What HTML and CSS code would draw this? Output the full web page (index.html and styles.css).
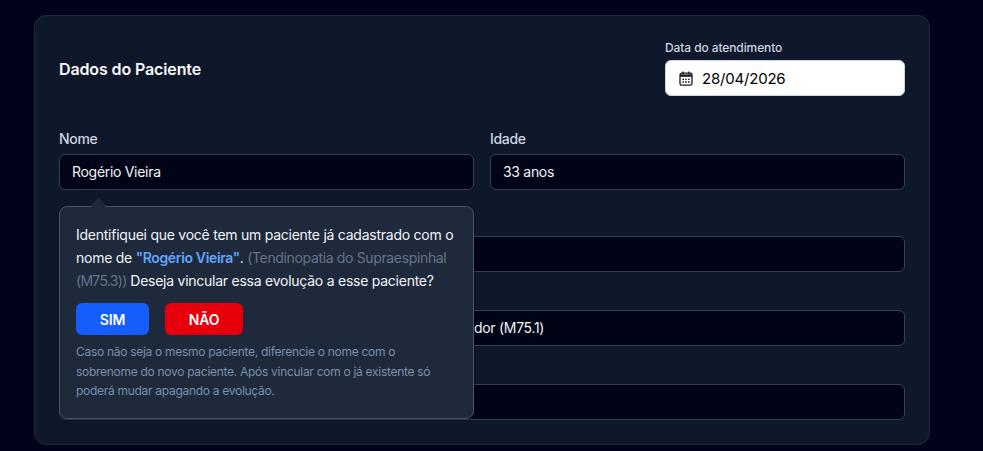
FILE: index.html
```html
<!DOCTYPE html>
<html lang="pt-BR">
<head>
    <meta charset="UTF-8">
    <meta name="viewport" content="width=device-width, initial-scale=1.0">
    <title>Dados do Paciente</title>
    <link rel="stylesheet" href="styles.css">
</head>
<body>

    <div class="card">
        <div class="card-header">
            <h2>Dados do Paciente</h2>
            <div class="date-box">
                <label class="date-label">Data do atendimento</label>
                <div class="date-field">
                    <svg class="date-icon" viewBox="0 0 14 15" width="14" height="15" fill="none" stroke="#1a1a1a" stroke-width="1.3">
                        <rect x="1" y="2.2" width="12" height="12" rx="1.6"/>
                        <path d="M4 0.4V3.4M10 0.4V3.4"/>
                        <path d="M1 4.6H13" stroke-width="2.4"/>
                        <path d="M3.4 8.4H5M6.2 8.4H7.8M9 8.4H10.6M3.4 11H5M6.2 11H7.8M9 11H10.6" stroke-width="1.4"/>
                    </svg>
                    <span>28/04/2026</span>
                </div>
            </div>
        </div>

        <div class="row two-cols">
            <div class="group name-group">
                <label>Nome</label>
                <div class="field">Rogério Vieira</div>

                <div class="popover">
                    <p class="pop-text">Identifiquei que você tem um paciente já cadastrado com o</p>
                    <p class="pop-text">nome de <strong>"Rogério Vieira"</strong>. <span class="pop-muted">(Tendinopatia do Supraespinhal</span></p>
                    <p class="pop-text"><span class="pop-muted pop-code">(M75.3))</span> Deseja vincular essa evolução a esse paciente?</p>
                    <div class="pop-actions">
                        <button class="btn-yes">SIM</button>
                        <button class="btn-no">NÃO</button>
                    </div>
                    <p class="pop-note">Caso não seja o mesmo paciente, diferencie o nome com o sobrenome do novo paciente. Após vincular com o já existente só poderá mudar apagando a evolução.</p>
                </div>
            </div>
            <div class="group">
                <label>Idade</label>
                <div class="field">33 anos</div>
            </div>
        </div>

        <!-- labels of these rows sit behind the popover -->
        <div class="row">
            <div class="group">
                <label></label>
                <div class="field"></div>
            </div>
        </div>

        <div class="row">
            <div class="group">
                <label></label>
                <div class="field field-covered">dor (M75.1)</div>
            </div>
        </div>

        <div class="row">
            <div class="group">
                <label></label>
                <div class="field"></div>
            </div>
        </div>
    </div>

</body>
</html>
```

FILE: styles.css
```css
* { box-sizing: border-box; }
body { margin: 0; height: 451px; overflow: hidden; background-color: #01031a; font-family: Inter, "Liberation Sans", sans-serif; color: #f1f5f9; }

.card { width: 896px; height: 430px; margin: 15px 0 0 34px; padding: 24px; background: #0f172a; border: 1px solid #1e293b; border-radius: 12px; }
.card-header { display: flex; justify-content: space-between; align-items: center; margin-bottom: 34px; }
.card-header h2 { margin: 2px 0 0; font-size: 16px; font-weight: 600; letter-spacing: -0.12px; color: #f8fafc; }

.date-box { width: 240px; }
.date-label { display: block; margin-bottom: 4px; font-size: 12px; line-height: 16px; font-weight: 500; letter-spacing: -0.1px; color: #cbd5e1; }
.date-field { display: flex; align-items: center; gap: 9px; height: 36px; padding: 0 13px; background: #fff; border: 1px solid #cbd5e1; border-radius: 6px; color: #000; font-size: 15px; letter-spacing: -0.2px; }
.date-icon { flex: none; }

.row { margin-bottom: 14px; }
.two-cols { display: grid; grid-template-columns: 1fr 1fr; gap: 16px; margin-bottom: 22px; }
.group label { display: block; height: 20px; margin: -1px 0 5px; font-size: 14px; line-height: 20px; font-weight: 500; letter-spacing: -0.3px; color: #cbd5e1; }
.field { height: 36px; padding: 0 12px; line-height: 34px; background: #010417; border: 1px solid #334155; border-radius: 6px; font-size: 14px; letter-spacing: -0.3px; white-space: nowrap; overflow: hidden; color: #f1f5f9; }
.field-covered { padding-left: 414px; }

.name-group { position: relative; }
.popover { position: absolute; top: 76px; left: 0; right: 0; z-index: 10; padding: 16px 16px 17px; background: #1e293b; border: 1px solid #475569; border-radius: 8px; box-shadow: 0 1px 3px rgba(0, 0, 0, 0.3); }
.popover::before { content: ""; position: absolute; top: -7px; left: 33px; width: 11px; height: 11px; background: #1e293b; transform: rotate(45deg); }
.pop-text { margin: 0; font-size: 14px; line-height: 23px; letter-spacing: -0.25px; white-space: nowrap; color: #f1f5f9; }
.pop-text strong { font-weight: 600; letter-spacing: -0.35px; color: #60a5fa; }
.pop-muted { letter-spacing: -0.35px; color: #64748b; }
.pop-code { letter-spacing: -0.7px; }
.pop-actions { display: flex; gap: 16px; margin-top: 11px; }
.pop-actions button { height: 32px; border: none; border-radius: 6px; color: #fff; font-family: inherit; font-size: 14px; font-weight: 600; letter-spacing: -0.2px; }
.btn-yes { width: 73px; background: #155dfc; }
.btn-no { width: 78px; background: #e7000b; }
.pop-note { margin: 7px 0 0; font-size: 12px; line-height: 19.5px; letter-spacing: -0.29px; color: #7a90ad; }
```
